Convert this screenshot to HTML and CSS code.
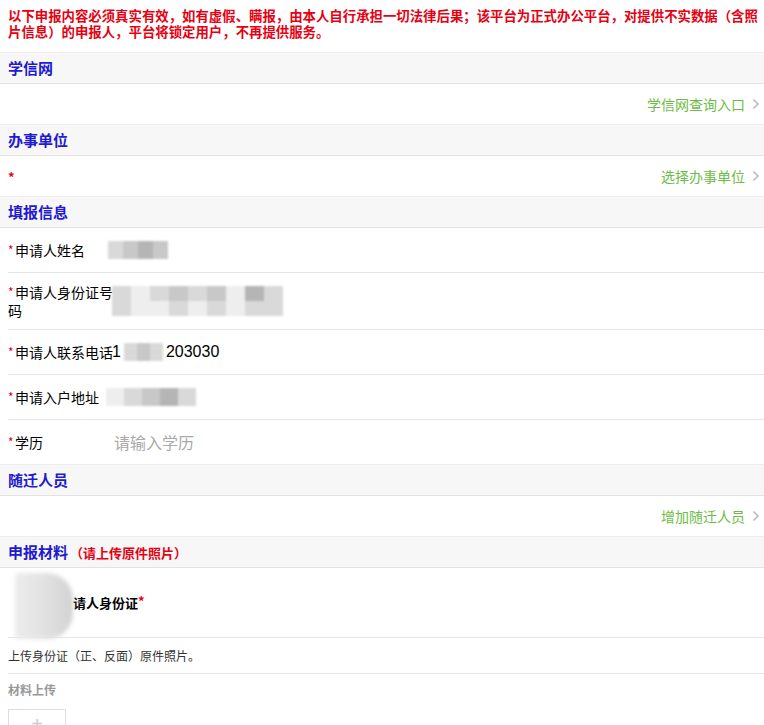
FILE: index.html
```html
<!DOCTYPE html>
<html lang="zh">
<head>
<meta charset="utf-8">
<title>申报</title>
<link rel="stylesheet" href="styles.css">
</head>
<body>
<div class="notice">以下申报内容必须真实有效，如有虚假、瞒报，由本人自行承担一切法律后果；该平台为正式办公平台，对提供不实数据（含照片信息）的申报人，平台将锁定用户，不再提供服务。</div>

<div class="sec-head">学信网</div>
<div class="link-row">
  <span></span>
  <a class="link">学信网查询入口<svg class="chev" width="8" height="12" viewBox="0 0 8 12"><polyline points="1.5,1.5 6,6 1.5,10.5" fill="none" stroke="#bbb" stroke-width="1.6"/></svg></a>
</div>

<div class="sec-head">办事单位</div>
<div class="link-row">
  <span class="req">*</span>
  <a class="link">选择办事单位<svg class="chev" width="8" height="12" viewBox="0 0 8 12"><polyline points="1.5,1.5 6,6 1.5,10.5" fill="none" stroke="#bbb" stroke-width="1.6"/></svg></a>
</div>

<div class="sec-head">填报信息</div>
<div class="fields">
  <div class="field">
    <div class="label"><span class="star">*</span>申请人姓名</div>
    <div class="value"><div class="blur b-name"><i class="c1"></i><i class="c2"></i><i class="c3"></i><i class="c2"></i></div></div>
  </div>
  <div class="field">
    <div class="label"><span class="star">*</span>申请人身份证号码</div>
    <div class="value"><div class="blur b-id"><div class="brow"><i class="c1"></i><i class="c0"></i><i class="c1"></i><i class="c2"></i><i class="c1"></i><i class="c2"></i><i class="c0"></i><i class="c3"></i><i class="c1"></i></div><div class="brow"><i class="c1"></i><i class="c0"></i><i class="c0"></i><i class="c1"></i><i class="c0"></i><i class="c1"></i><i class="c0"></i><i class="c1"></i><i class="c1"></i></div></div></div>
  </div>
  <div class="field">
    <div class="label"><span class="star">*</span>申请人联系电话</div>
    <div class="value phone">1<div class="blur b-phone"><i class="c1"></i><i class="c2"></i><i class="c1"></i></div>203030</div>
  </div>
  <div class="field">
    <div class="label"><span class="star">*</span>申请入户地址</div>
    <div class="value"><div class="blur b-addr"><i class="c0"></i><i class="c1"></i><i class="c2"></i><i class="c3"></i><i class="c1"></i></div></div>
  </div>
  <div class="field">
    <div class="label"><span class="star">*</span>学历</div>
    <div class="value placeholder">请输入学历</div>
  </div>
</div>

<div class="sec-head">随迁人员</div>
<div class="link-row">
  <span></span>
  <a class="link">增加随迁人员<svg class="chev" width="8" height="12" viewBox="0 0 8 12"><polyline points="1.5,1.5 6,6 1.5,10.5" fill="none" stroke="#bbb" stroke-width="1.6"/></svg></a>
</div>

<div class="sec-head">申报材料<span class="sub">（请上传原件照片）</span></div>
<div class="material">
  <div class="thumb"></div>
  <div class="mat-title">请人身份证<span class="star">*</span></div>
</div>
<div class="mat-desc">上传身份证（正、反面）原件照片。</div>
<div class="upload-label">材料上传</div>
<div class="upload-box"><span class="plus">+</span></div>
</body>
</html>
```

FILE: styles.css
```css
html, body {
  margin: 0;
  padding: 0;
  background: #fff;
}
body {
  font-family: "Noto Sans CJK SC", "Liberation Sans", sans-serif;
  color: #000;
  overflow: hidden;
}
.notice {
  color: #e60012;
  font-weight: bold;
  font-size: 13.4px;
  line-height: 16px;
  padding: 7px 2px 13px 8px;
}
.sec-head {
  background: #f7f7f7;
  border-top: 1px solid #eee;
  border-bottom: 1px solid #e2e2e2;
  height: 30px;
  line-height: 30px;
  padding-left: 8px;
  font-size: 15px;
  font-weight: bold;
  color: #2219d0;
}
.sec-head .sub {
  color: #e60012;
  font-size: 13px;
  margin-left: 2px;
}
.link-row {
  height: 40px;
  display: flex;
  align-items: center;
  justify-content: space-between;
  padding: 0 4px 0 8px;
}
.req {
  color: #e60012;
  font-size: 13px;
  font-weight: bold;
}
.link {
  color: #6cbd45;
  font-size: 14px;
  display: flex;
  align-items: center;
  gap: 7px;
}
.chev {
  display: block;
}
.fields {
  padding-left: 8px;
}
.field {
  display: flex;
  align-items: center;
  min-height: 44px;
  border-bottom: 1px solid #e6e6e6;
}
.field:last-child {
  border-bottom: none;
}
.label {
  width: 106px;
  flex: none;
  font-size: 14px;
  line-height: 18px;
  padding: 10px 0;
}
.star {
  color: #e60012;
  font-size: 12px;
  display: inline-block;
  width: 7px;
  vertical-align: top;
  line-height: 18px;
}
.value {
  flex: 1;
  font-family: "Liberation Sans", "Noto Sans CJK SC", sans-serif;
  font-size: 16px;
  display: flex;
  align-items: center;
}
.placeholder {
  color: #a9a9a9;
  font-family: "Noto Sans CJK SC", sans-serif;
}
.phone {
  margin-left: -2px;
}
.blur {
  display: flex;
  filter: blur(1.2px);
}
.blur i {
  display: block;
  width: 15px;
  height: 18px;
}
.c0 { background: #eeeeee; }
.c1 { background: #d9d9d9; }
.c2 { background: #c8c8c8; }
.c3 { background: #b5b5b5; }
.b-name {
  margin-left: -6px;
}
.b-id {
  flex-direction: column;
  margin-left: -2px;
}
.brow {
  display: flex;
}
.brow i {
  width: 19px;
  height: 15px;
}
.b-phone {
  margin: 0 3px;
}
.b-phone i {
  width: 13px;
}
.b-addr {
  margin-left: -8px;
}
.b-addr i {
  width: 18px;
}
.material {
  height: 69px;
  display: flex;
  align-items: center;
  border-bottom: 1px solid #e6e6e6;
  margin-left: 8px;
}
.thumb {
  width: 58px;
  height: 66px;
  margin-left: 7px;
  margin-top: 6px;
  border-radius: 4px 26px 26px 4px;
  background: linear-gradient(90deg, #ececec 0%, #e2e2e2 50%, #d2d2d2 100%);
  filter: blur(2px);
}
.mat-title {
  font-size: 13px;
  font-weight: bold;
  margin-left: 0;
}
.mat-title .star {
  font-size: 13px;
  width: auto;
  line-height: 16px;
}
.mat-desc {
  margin-left: 8px;
  height: 35px;
  line-height: 35px;
  font-size: 12px;
  color: #333;
  border-bottom: 1px solid #e6e6e6;
}
.upload-label {
  padding-left: 8px;
  height: 30px;
  line-height: 30px;
  margin-top: 1px;
  font-size: 12px;
  font-weight: bold;
  color: #999;
}
.upload-box {
  margin: 4px 0 0 8px;
  width: 58px;
  height: 58px;
  border: 1px solid #ddd;
  display: flex;
  justify-content: center;
  padding-top: 4px;
  box-sizing: border-box;
}
.plus {
  color: #ccc;
  font-size: 20px;
  line-height: 20px;
  font-family: "Liberation Sans", sans-serif;
}
```
